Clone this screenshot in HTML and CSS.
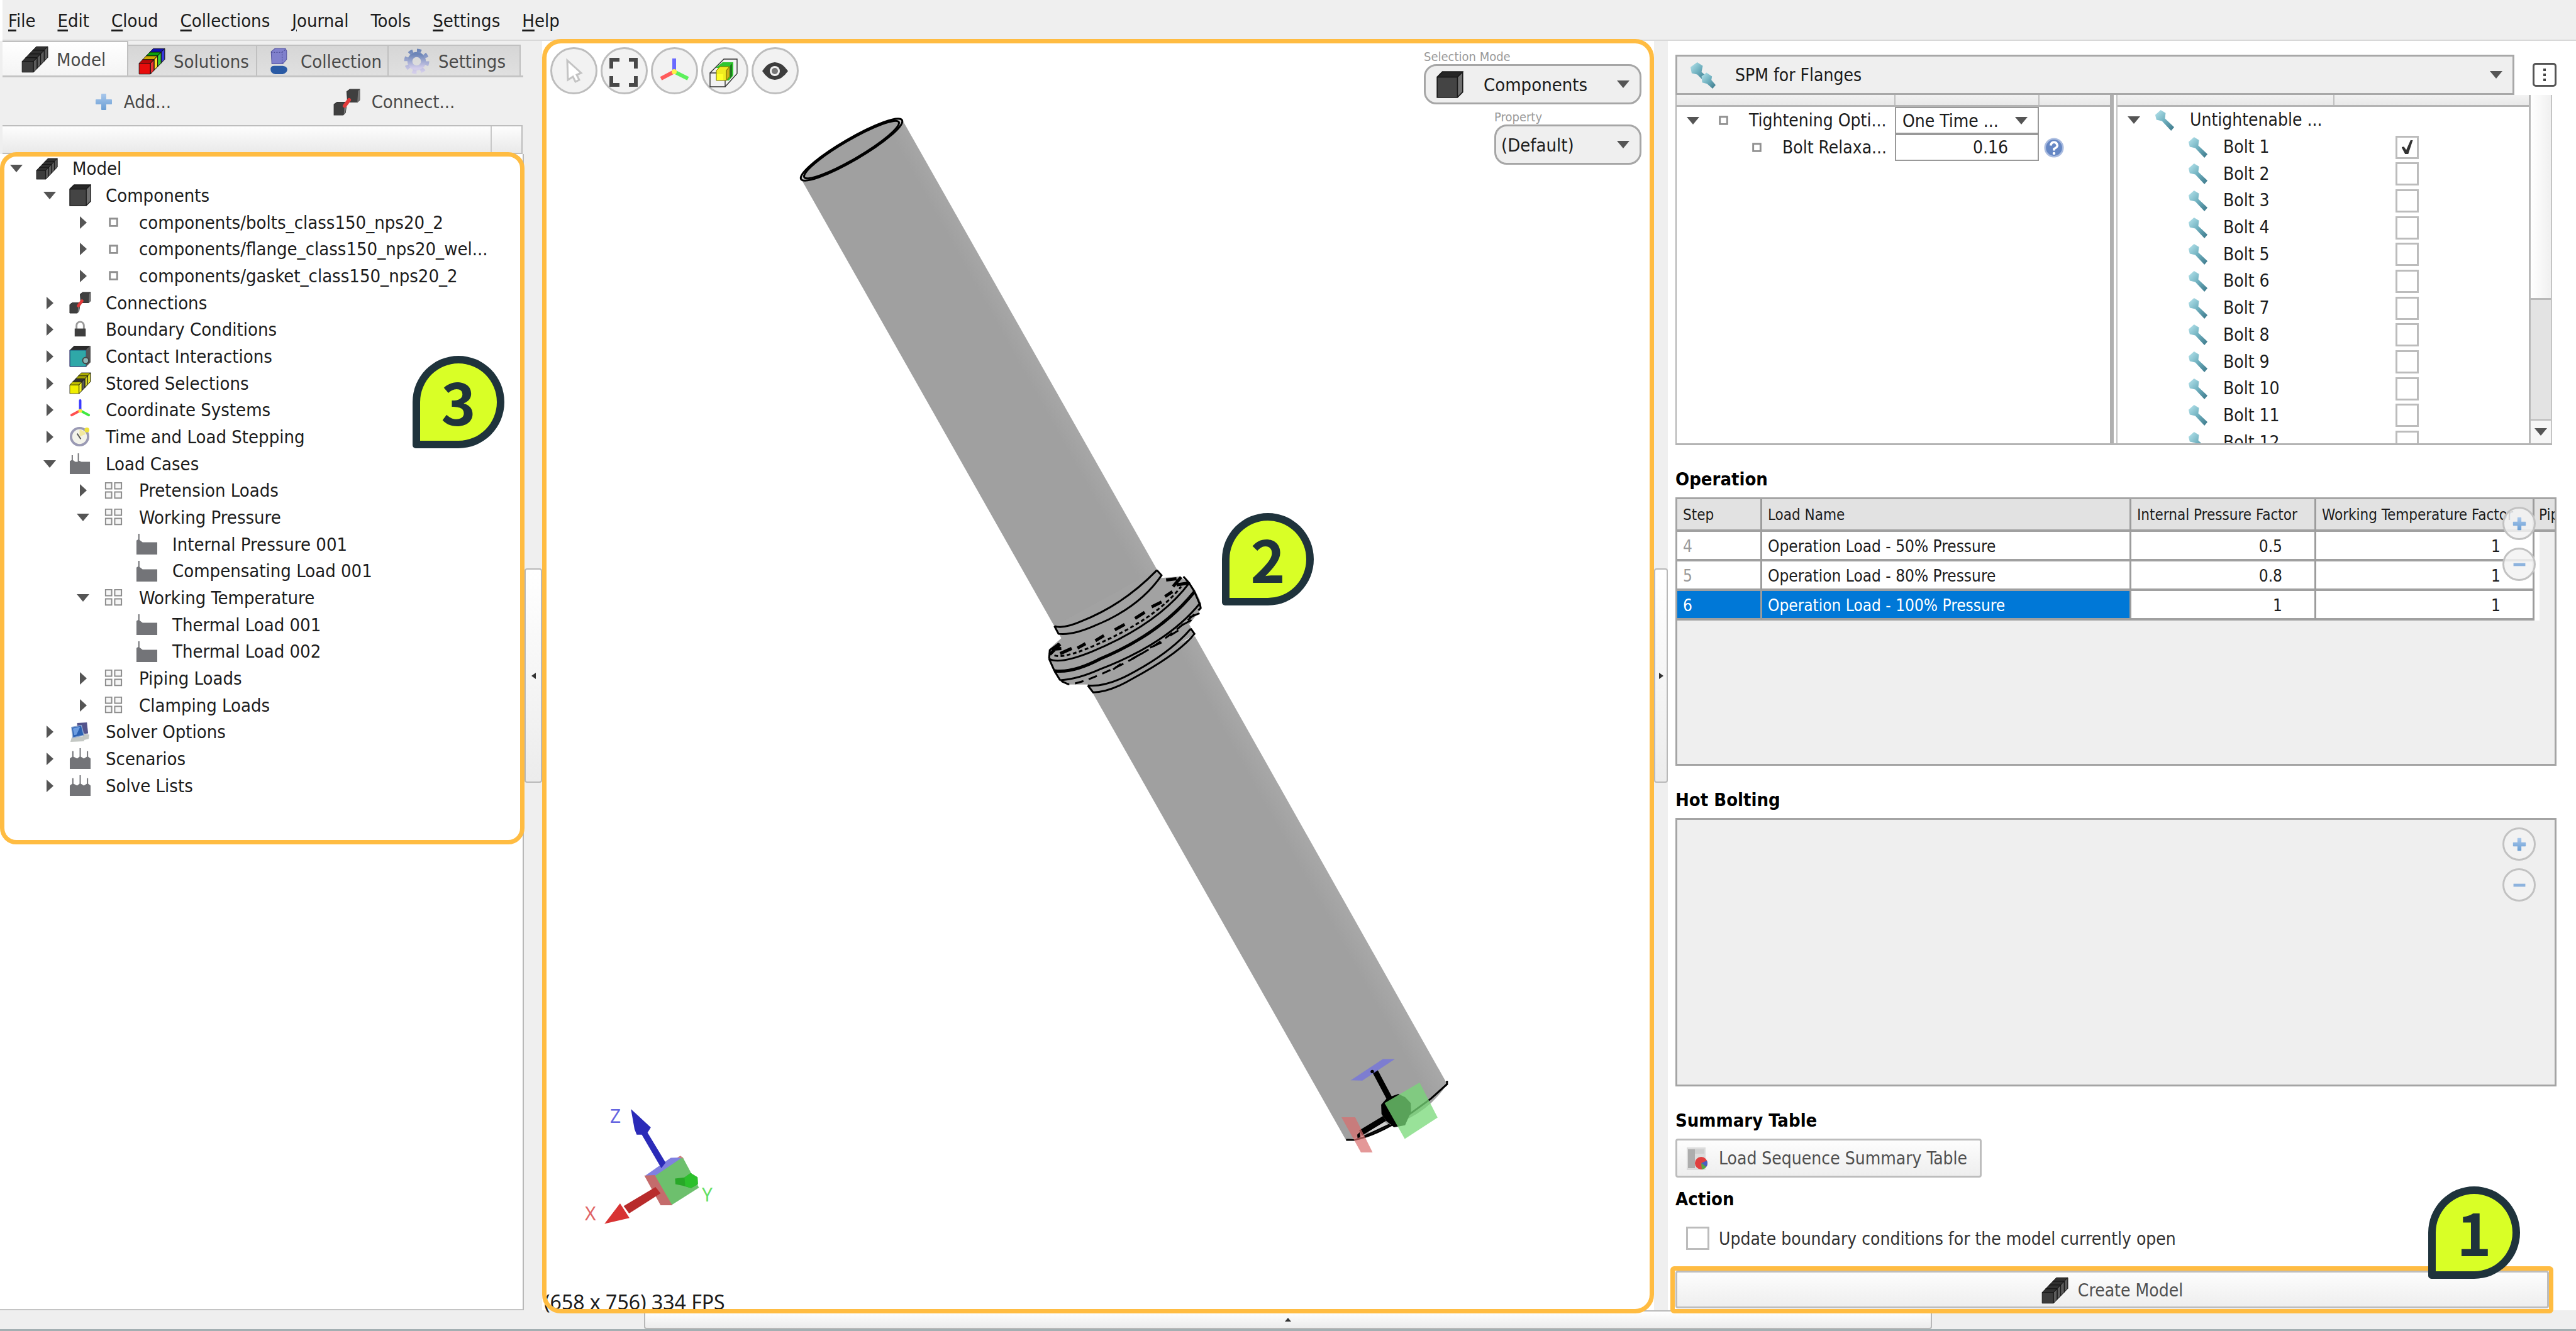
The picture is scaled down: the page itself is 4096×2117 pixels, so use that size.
FILE: index.html
```html
<!DOCTYPE html>
<html lang="en">
<head>
<meta charset="utf-8">
<title>SPM for Flanges</title>
<link rel="stylesheet" href="styles.css">
</head>
<body>
<svg class="defs" aria-hidden="true">
  <defs>
    <g id="seg" stroke="#111" stroke-width=".7">
      <path fill="currentColor" d="M0 5.2H16V20.4H0Z"/>
      <path fill="currentColor" d="M0 5.2 5 0H21L16 5.2Z"/>
      <path fill="#000" fill-opacity=".2" stroke="none" d="M0 5.2 5 0H21L16 5.2Z"/>
      <path fill="currentColor" d="M16 5.2 21 0V15.2L16 20.4Z"/>
      <path fill="#fff" fill-opacity=".16" d="M16 5.2 21 0V15.2L16 20.4Z"/>
    </g>
    <linearGradient id="steel" x1="0" y1="0" x2="1" y2="1">
      <stop offset="0" stop-color="#b9e6ee"/><stop offset=".5" stop-color="#6fb0bf"/><stop offset="1" stop-color="#3b7688"/>
    </linearGradient>
    <linearGradient id="plusfill" x1="0" y1="0" x2="0" y2="1">
      <stop offset="0" stop-color="#a9c8ec"/><stop offset="1" stop-color="#6a9ed4"/>
    </linearGradient>
    <linearGradient id="gearfill" x1="0" y1="0" x2="0" y2="1">
      <stop offset="0" stop-color="#6d86b8"/><stop offset="1" stop-color="#d3cdea"/>
    </linearGradient>
    <linearGradient id="pipefill" gradientUnits="userSpaceOnUse" x1="1600" y1="700" x2="1722" y2="632">
      <stop offset="0" stop-color="#a0a0a0"/><stop offset=".55" stop-color="#a0a0a0"/><stop offset="1" stop-color="#aeaeae"/>
    </linearGradient>
  </defs>
  <symbol id="i-bar" viewBox="-1 -1 38 38"><g color="#3c3c3c"><use href="#seg" x="15" y="0"/><use href="#seg" x="10" y="5.2"/><use href="#seg" x="5" y="10.4"/><use href="#seg" x="0" y="15.6"/></g></symbol>
  <symbol id="i-rainbow" viewBox="-1 -1 38 38"><use href="#seg" x="15" y="0" color="#1414d8"/><use href="#seg" x="10" y="5.2" color="#10c810"/><use href="#seg" x="5" y="10.4" color="#ffd400"/><use href="#seg" x="0" y="15.6" color="#e80c0c"/></symbol>
  <symbol id="i-stored" viewBox="-1 -1 38 38"><use href="#seg" x="15" y="0" color="#d8d800"/><use href="#seg" x="10" y="5.2" color="#c8c800"/><use href="#seg" x="5" y="10.4" color="#3c3c3c"/><use href="#seg" x="0" y="15.6" color="#f0ee00"/></symbol>
  <symbol id="i-cube" viewBox="0 0 36 36"><path fill="#444" d="M1 8H28V35H1Z"/><path fill="#262626" d="M1 8 8 1H35L28 8Z"/><path fill="#707070" d="M28 8 35 1V28L28 35Z"/><path fill="none" stroke="#1a1a1a" stroke-width="1.4" d="M1 8H28V35H1ZM1 8 8 1H35L28 8M35 1V28L28 35"/></symbol>
  <symbol id="i-connect" viewBox="0 0 36 36"><path fill="#3f3f3f" stroke="#333" d="M1 21 5 18H18L16 32 13 35H1ZM18 4 22 1H35V15L32 18H19Z"/><path fill="#777" d="M33 3 35 1V15L32 18ZM15 20 18 18 16 32 14 34Z"/><path stroke="#e23a3a" stroke-width="5" stroke-linecap="round" d="M15 23 21 15"/></symbol>
  <symbol id="i-lock" viewBox="0 0 36 36"><path fill="none" stroke="#9a9a9a" stroke-width="3" d="M12 18V11a6 6 0 0 1 12 0V18"/><path fill="#3e3e3e" d="M9 16H27V29H9Z"/></symbol>
  <symbol id="i-contact" viewBox="0 0 36 36"><path fill="#2fa8a8" stroke="#115" d="M1 8H28V35H1Z"/><path fill="#2b2b2b" d="M1 8 8 1H35L28 8Z"/><path fill="#555" d="M28 8 35 1V28L28 35Z"/><circle cx="27" cy="25" r="5" fill="#8fb5b5" stroke="#444" stroke-width="2"/></symbol>
  <symbol id="i-axes" viewBox="0 0 36 36"><g stroke-width="4" stroke-linecap="round"><path stroke="#3a3aff" d="M18 2V18"/><path stroke="#ff5050" d="M17 19 4 26"/><path stroke="#40e840" d="M19 19 32 26"/></g><circle cx="18" cy="19" r="3" fill="#f5e63c"/></symbol>
  <symbol id="i-clock" viewBox="0 0 36 36"><circle cx="17" cy="18" r="14" fill="#f3f3ea" stroke="#9a9ab4" stroke-width="4"/><path fill="#f2e9a0" d="M17 18V7A11 11 0 0 1 27 14Z"/><path d="M17 19 13 13M17 19 19 22" stroke="#555" stroke-width="2"/><circle cx="29" cy="7" r="4" fill="#efe23a"/></symbol>
  <symbol id="i-cases" viewBox="0 0 36 36"><path fill="#737478" d="M1 14 4 12V4h2v8l4 3h4V1h2v12l4 2h14V35H1Z"/></symbol>
  <symbol id="i-load" viewBox="0 0 36 36"><path fill="#737478" d="M1 12 4 10V1h2v10l5 4H35V35H1Z"/></symbol>
  <symbol id="i-scen" viewBox="0 0 36 36"><path fill="#737478" d="M1 18 5 15V6h2v9l6 3 4-3V1h2v14l5 3 5-3V6h2v9l4 3V35H1Z"/></symbol>
  <symbol id="i-group" viewBox="0 0 36 36"><path fill="#f6f6f6" stroke="#8c8c8c" stroke-width="2" d="M5 5H15V15H5ZM20 5H31V15H20ZM5 20H15V30H5ZM20 20H31V30H20Z"/></symbol>
  <symbol id="i-node" viewBox="0 0 36 36"><path fill="#fff" stroke="#909090" stroke-width="3" d="M12 12H24V24H12Z"/></symbol>
  <symbol id="i-pc" viewBox="0 0 36 36"><path fill="#54548c" d="M13 3 29 2 31 20 14 22Z"/><path fill="#c4c8c4" d="M24 20 33 22 32 29 20 32ZM4 27 22 25 25 33 2 34Z"/><path fill="#2b62b4" stroke="#8fa8d0" stroke-width="1.5" d="M4 10 20 7 24 23 6 27Z"/><path fill="#6d9de0" d="M6 12 18 9 12 22 8 23Z"/></symbol>
  <symbol id="i-bolt" viewBox="0 0 36 36"><path fill="url(#steel)" d="M3 9 12 1 20 6 19 15 34 29 29 35 14 19 5 17Z"/></symbol>
  <symbol id="i-bolts" viewBox="0 0 44 44"><path fill="url(#steel)" d="M2 9 13 1 22 7 20 17 27 23 22 30 13 21 4 19Z"/><path fill="url(#steel)" d="M20 24 28 18 37 24 36 30 43 38 38 44 29 36 21 34Z"/></symbol>
  <symbol id="i-coll" viewBox="0 0 28 42"><path fill="#8080cc" stroke="#5454a0" d="M2 6 8 1H24L26 5V18L20 25H3Z"/><path fill="none" stroke="#44448c" stroke-dasharray="2 2" d="M2 7H19V25M19 7 25 2"/><path fill="#2a5aa4" d="M1 33Q1 28 7 28H20Q27 29 27 34T20 41H8Q1 40 1 33Z"/></symbol>
  <symbol id="i-gear" viewBox="0 0 44 44"><circle cx="22" cy="22" r="11" fill="none" stroke="url(#gearfill)" stroke-width="8"/><circle cx="22" cy="22" r="17.5" fill="none" stroke="url(#gearfill)" stroke-width="6" stroke-dasharray="6.9 6.84"/></symbol>
  <symbol id="i-plus" viewBox="0 0 28 28"><path fill="url(#plusfill)" d="M11 1h6q1 0 1 1v8h8q1 0 1 1v6q0 1-1 1h-8v8q0 1-1 1h-6q-1 0-1-1v-8H2q-1 0-1-1v-6q0-1 1-1h8V2q0-1 1-1Z"/></symbol>
  <symbol id="i-minus" viewBox="0 0 28 28"><path fill="#8db3de" d="M2 11H26V17H2Z"/></symbol>
  <symbol id="i-sheet" viewBox="0 0 36 40"><path fill="#dcdcdc" d="M1 2H31V38H1Z"/><path fill="#adadad" d="M3 5H14V35H3Z"/><path fill="#cfcfcf" d="M14 5H29V12H14Z"/><circle cx="24" cy="27" r="10" fill="#e04040"/><path fill="#4660c0" d="M24 27 33 23A10 10 0 0 1 32 33Z"/><path fill="#55a848" d="M24 27 32 33A10 10 0 0 1 25 37Z"/></symbol>
  <symbol id="i-help" viewBox="0 0 36 36"><circle cx="18" cy="18" r="16" fill="#6587c4" stroke="#a9bbdf" stroke-width="3"/><path fill="none" stroke="#fff" stroke-width="4" d="M12 14Q13 8 18 8T24 14Q24 17 18 20V23"/><circle cx="18" cy="28" r="2.5" fill="#fff"/></symbol>
  <symbol id="i-cursor" viewBox="0 0 75 75"><path fill="#fff" stroke="#c4c4c4" stroke-width="3" d="M27 21 49 41 42 44 46 52 40 55 36 47 28 52Z"/></symbol>
  <symbol id="i-fit" viewBox="0 0 75 75"><path fill="none" stroke="#484848" stroke-width="6" d="M17 34V20H30M45 20H56V34M56 46V60H45M30 60H17V46"/></symbol>
  <symbol id="i-triad" viewBox="0 0 75 75"><g stroke-width="6"><path stroke="#6a6aff" d="M37 18V36"/><path stroke="#ff5c5c" d="M35 40 16 50"/><path stroke="#5cf05c" d="M39 40 59 50"/></g><circle cx="37" cy="39" r="4" fill="#fff04a"/></symbol>
  <symbol id="i-clip" viewBox="0 0 75 75"><path fill="none" stroke="#333" stroke-width="1.4" d="M14 41H38V63H14ZM14 41 36 19H57V42L38 63"/><path fill="#2fc62f" d="M23 33 34 24H51V45L44 53H40V33Z"/><path fill="#1d7a1d" d="M49 26V46L46 50V29Z"/><path fill="#f0ec20" stroke="#7a7400" d="M24 37 30 31H45L40 37V53H24Z"/><path fill="#cfae1a" stroke="#7a7400" d="M40 37 45 31V47L40 53Z"/><path fill="#ffff28" d="M25 43H35V52H25Z"/></symbol>
  <symbol id="i-eye" viewBox="0 0 75 75"><path fill="#3d3d3d" d="M17 38Q26 24 37 24T58 38Q48 52 37 52T17 38Z"/><circle cx="37" cy="38" r="8" fill="#f2f2f2"/><circle cx="37" cy="38" r="5" fill="#777"/></symbol>
</svg>

<nav class="menubar">
  <a href="#"><u>F</u>ile</a><a href="#"><u>E</u>dit</a><a href="#"><u>C</u>loud</a><a href="#"><u>C</u>ollections</a><a href="#"><u>J</u>ournal</a><a href="#">Tools</a><a href="#"><u>S</u>ettings</a><a href="#"><u>H</u>elp</a>
</nav>

<main class="workspace">
  <section class="browser">
    <div class="tabs">
      <button class="tab active"><svg class="ic42"><use href="#i-bar"/></svg>Model</button>
      <button class="tab"><svg class="ic42"><use href="#i-rainbow"/></svg>Solutions</button>
      <button class="tab coll"><svg class="ic42"><use href="#i-coll"/></svg>Collection</button>
      <button class="tab sett"><svg class="ic42"><use href="#i-gear"/></svg>Settings</button>
    </div>
    <div class="actions">
      <button><svg class="ic28"><use href="#i-plus"/></svg>Add...</button>
      <button><svg class="ic42"><use href="#i-connect"/></svg>Connect...</button>
    </div>
    <div class="treehead"></div>
    <div class="treewrap">
      <ul class="tree">
        <li class="row"><i class="tri open"></i><svg><use href="#i-bar"/></svg><span>Model</span></li>
        <li class="row l1"><i class="tri open"></i><svg><use href="#i-cube"/></svg><span>Components</span></li>
        <li class="row l2"><i class="tri"></i><svg><use href="#i-node"/></svg><span>components/bolts_class150_nps20_2</span></li>
        <li class="row l2"><i class="tri"></i><svg><use href="#i-node"/></svg><span>components/flange_class150_nps20_wel...</span></li>
        <li class="row l2"><i class="tri"></i><svg><use href="#i-node"/></svg><span>components/gasket_class150_nps20_2</span></li>
        <li class="row l1"><i class="tri"></i><svg><use href="#i-connect"/></svg><span>Connections</span></li>
        <li class="row l1"><i class="tri"></i><svg><use href="#i-lock"/></svg><span>Boundary Conditions</span></li>
        <li class="row l1"><i class="tri"></i><svg><use href="#i-contact"/></svg><span>Contact Interactions</span></li>
        <li class="row l1"><i class="tri"></i><svg><use href="#i-stored"/></svg><span>Stored Selections</span></li>
        <li class="row l1"><i class="tri"></i><svg><use href="#i-axes"/></svg><span>Coordinate Systems</span></li>
        <li class="row l1"><i class="tri"></i><svg><use href="#i-clock"/></svg><span>Time and Load Stepping</span></li>
        <li class="row l1"><i class="tri open"></i><svg><use href="#i-cases"/></svg><span>Load Cases</span></li>
        <li class="row l2"><i class="tri"></i><svg><use href="#i-group"/></svg><span>Pretension Loads</span></li>
        <li class="row l2"><i class="tri open"></i><svg><use href="#i-group"/></svg><span>Working Pressure</span></li>
        <li class="row l3"><i class="tri none"></i><svg><use href="#i-load"/></svg><span>Internal Pressure 001</span></li>
        <li class="row l3"><i class="tri none"></i><svg><use href="#i-load"/></svg><span>Compensating Load 001</span></li>
        <li class="row l2"><i class="tri open"></i><svg><use href="#i-group"/></svg><span>Working Temperature</span></li>
        <li class="row l3"><i class="tri none"></i><svg><use href="#i-load"/></svg><span>Thermal Load 001</span></li>
        <li class="row l3"><i class="tri none"></i><svg><use href="#i-load"/></svg><span>Thermal Load 002</span></li>
        <li class="row l2"><i class="tri"></i><svg><use href="#i-group"/></svg><span>Piping Loads</span></li>
        <li class="row l2"><i class="tri"></i><svg><use href="#i-group"/></svg><span>Clamping Loads</span></li>
        <li class="row l1"><i class="tri"></i><svg><use href="#i-pc"/></svg><span>Solver Options</span></li>
        <li class="row l1"><i class="tri"></i><svg><use href="#i-scen"/></svg><span>Scenarios</span></li>
        <li class="row l1"><i class="tri"></i><svg><use href="#i-scen"/></svg><span>Solve Lists</span></li>
      </ul>
      <div class="mark mark-tree"></div>
      <div class="badge badge-tree">3</div>
    </div>
  </section>

  <div class="gutter"><button class="grip left" aria-label="Collapse left panel"></button></div>

  <section class="viewport">
    <svg class="scene" viewBox="862 65 1768 2019">
      <g fill="url(#pipefill)">
        <path d="M1274 285 1435 191 1842 910 1677 997Z"/>
        <path d="M1730 1089 1900 1012 2301 1724Q2275 1765 2225 1786T2140 1813Z"/>
      </g>
      <g fill="#a0a0a0" stroke="#000" stroke-width="3">
        <ellipse cx="1354" cy="238" rx="93" ry="17" fill="#c4c4c4" transform="rotate(-30.3 1354 238)"/>
        <ellipse cx="1354" cy="238" rx="87" ry="15" transform="rotate(-30.3 1354 238)"/>
      </g>
      <g transform="translate(1559.3 804.3) scale(.3664 .2736)">
        <path fill="#a2a2a2" d="M320 700 765 372 785 420 860 412 905 445 930 490 952 550 957 600 905 690 930 750 490 1085 465 1040 380 1040 345 1010 320 960 297 900 300 830 350 770Z"/>
        <g class="edges" fill="none" stroke="#000">
          <path d="M320 700Q360 718 440 670 620 575 765 375M320 700 338 745Q400 755 500 695 690 590 785 405L765 375"/>
          <path d="M297 890Q340 925 480 850 770 690 905 450L880 412M297 890 300 840 340 800"/>
          <path stroke-dasharray="6 4" d="M320 870Q360 890 490 815 760 660 870 470"/>
          <path class="heavy" d="M320 960Q400 975 520 890 780 745 928 500"/>
          <path d="M928 500 905 450M320 960 297 890"/>
          <path d="M345 1015Q420 1010 520 950 810 800 950 570L928 500M345 1015 320 960"/>
          <path stroke-dasharray="14 9" d="M350 1020 380 1038Q430 1036 530 975 780 830 955 595L950 560"/>
          <path d="M465 1045Q540 1055 640 985 820 860 912 715M465 1045 488 1085Q560 1085 660 1005 860 860 928 745L912 715"/>
          <path class="heavy" d="M300 865 345 805M345 860 395 830M420 828 455 802M498 785 535 755M582 722 625 690M670 655 712 620M742 588 785 560M800 528 832 500M805 432 850 425M835 470 870 415M850 460 900 450M310 835 350 830"/>
          <path d="M735 825 785 795M655 892 698 860M575 952 608 920M822 755 858 725M873 695 915 665M905 650 950 625"/>
        </g>
      </g>
      <g transform="translate(2084.6 1666) scale(.272)">
        <path fill="none" stroke="#000" stroke-width="11" d="M205 540H255Q400 510 590 380L700 300 795 215V195"/>
        <path fill="#d0d0d0" d="M330 495 425 430 455 455 345 500Z"/>
        <path stroke="#000" stroke-width="34" d="M375 140 460 300M290 500 430 415"/>
        <path stroke="#000" stroke-width="10" d="M310 520 460 450"/>
        <path d="M410 335 445 295 510 272 550 290 583 325 585 375 550 455 485 467 440 430 412 390Z"/>
        <path fill="#7777d8" fill-opacity=".85" d="M232 192 420 68H490L300 194Z"/>
        <circle cx="358" cy="141" r="10"/>
        <path fill="#77d877" fill-opacity=".75" d="M430 325 635 205 740 410 548 535Z"/>
        <path fill="#d86c6c" fill-opacity=".7" d="M178 408H258L360 614H292Z"/>
        <path d="M270 510 285 495 288 525 272 530Z"/>
      </g>
      <g transform="translate(853.5 1707) scale(.5757 .2736)">
        <path fill="#8080e0" d="M300 595 370 492 403 490 330 600Z"/>
        <path fill="#6dc06d" d="M326 598 403 488 448 665 372 767Z"/>
        <path fill="#c46c6c" d="M297 595 326 592 374 768H342Z"/>
        <path fill="#cc8080" d="M388 490 397 480 406 496Z"/>
        <path fill="#2b2bb8" d="M260 208 315 315 306 345 356 520 344 552 290 357H276L270 325Z"/>
        <path fill="#28a828" d="M382 612 408 606 425 580 444 605 445 645 426 668 404 654 383 645Z"/>
        <path fill="#2cc02c" d="M408 606 425 580 444 605 445 645 426 668 410 656Z"/>
        <path fill="#b82b2b" d="M328 662 342 698 255 815 240 772Z"/>
        <path fill="#d83333" d="M230 757 256 842 187 875Z"/>
      </g>
      <g class="axis-names">
        <text x="970" y="1786" fill="#6464e0">Z</text>
        <text x="1116" y="1911" fill="#64e064">Y</text>
        <text x="930" y="1941" fill="#e06464">X</text>
      </g>
    </svg>
    <div class="viewtools">
      <button aria-label="Select"><svg><use href="#i-cursor"/></svg></button>
      <button aria-label="Fit view"><svg><use href="#i-fit"/></svg></button>
      <button aria-label="Orientation"><svg><use href="#i-triad"/></svg></button>
      <button aria-label="Clip"><svg><use href="#i-clip"/></svg></button>
      <button aria-label="Visibility"><svg><use href="#i-eye"/></svg></button>
    </div>
    <div class="modes">
      <div class="mode wide">
        <label for="selmode">Selection Mode</label>
        <div class="combo round"><svg class="ic42"><use href="#i-cube"/></svg><select id="selmode"><option>Components</option></select></div>
      </div>
      <div class="mode">
        <label for="prop">Property</label>
        <div class="combo round"><select id="prop"><option>(Default)</option></select></div>
      </div>
    </div>
    <div class="fps">(658 x 756) 334 FPS</div>
    <div class="mark mark-view"></div>
    <div class="badge badge-view">2</div>
  </section>

  <div class="gutter"><button class="grip right" aria-label="Collapse right panel"></button></div>

  <section class="wizard">
    <div class="titlerow">
      <div class="combo title"><svg class="ic42"><use href="#i-bolts"/></svg><select aria-label="Wizard"><option>SPM for Flanges</option></select></div>
      <button class="kebab" aria-label="More"><i></i><i></i><i></i></button>
    </div>
    <div class="split">
      <div class="params">
        <div class="strip"><i></i><i></i><i></i></div>
        <div class="rows two">
          <div class="prow"><div class="row"><i class="tri open"></i><svg><use href="#i-node"/></svg><label for="tight">Tightening Opti...</label></div><div class="combo cell"><select id="tight"><option>One Time ...</option></select></div></div>
          <div class="prow"><div class="row l1"><i class="tri none"></i><svg><use href="#i-node"/></svg><label for="relax">Bolt Relaxa...</label></div><input id="relax" class="num" type="text" value="0.16"><svg class="help"><use href="#i-help"/></svg></div>
        </div>
      </div>
      <div class="bolts">
        <div class="strip"><i></i><i></i></div>
        <div class="rows thirteen">
          <div class="row"><i class="tri open"></i><svg><use href="#i-bolt"/></svg><span>Untightenable ...</span></div>
          <div class="brow"><label class="row l1" for="b1"><i class="tri none"></i><svg><use href="#i-bolt"/></svg>Bolt 1</label><input type="checkbox" id="b1" checked></div>
          <div class="brow"><label class="row l1" for="b2"><i class="tri none"></i><svg><use href="#i-bolt"/></svg>Bolt 2</label><input type="checkbox" id="b2"></div>
          <div class="brow"><label class="row l1" for="b3"><i class="tri none"></i><svg><use href="#i-bolt"/></svg>Bolt 3</label><input type="checkbox" id="b3"></div>
          <div class="brow"><label class="row l1" for="b4"><i class="tri none"></i><svg><use href="#i-bolt"/></svg>Bolt 4</label><input type="checkbox" id="b4"></div>
          <div class="brow"><label class="row l1" for="b5"><i class="tri none"></i><svg><use href="#i-bolt"/></svg>Bolt 5</label><input type="checkbox" id="b5"></div>
          <div class="brow"><label class="row l1" for="b6"><i class="tri none"></i><svg><use href="#i-bolt"/></svg>Bolt 6</label><input type="checkbox" id="b6"></div>
          <div class="brow"><label class="row l1" for="b7"><i class="tri none"></i><svg><use href="#i-bolt"/></svg>Bolt 7</label><input type="checkbox" id="b7"></div>
          <div class="brow"><label class="row l1" for="b8"><i class="tri none"></i><svg><use href="#i-bolt"/></svg>Bolt 8</label><input type="checkbox" id="b8"></div>
          <div class="brow"><label class="row l1" for="b9"><i class="tri none"></i><svg><use href="#i-bolt"/></svg>Bolt 9</label><input type="checkbox" id="b9"></div>
          <div class="brow"><label class="row l1" for="b10"><i class="tri none"></i><svg><use href="#i-bolt"/></svg>Bolt 10</label><input type="checkbox" id="b10"></div>
          <div class="brow"><label class="row l1" for="b11"><i class="tri none"></i><svg><use href="#i-bolt"/></svg>Bolt 11</label><input type="checkbox" id="b11"></div>
          <div class="brow"><label class="row l1" for="b12"><i class="tri none"></i><svg><use href="#i-bolt"/></svg>Bolt 12</label><input type="checkbox" id="b12"></div>
        </div>
      </div>
      <div class="scroll"><div class="thumb"></div><div class="track"></div><div class="down"><i class="tri open"></i></div></div>
    </div>

    <h2>Operation</h2>
    <div class="panel">
      <table>
        <colgroup><col class="c1"><col class="c2"><col class="c3"><col class="c4"><col></colgroup>
        <thead><tr><th>Step</th><th>Load Name</th><th>Internal Pressure Factor</th><th>Working Temperature Factor</th><th>Pip</th></tr></thead>
        <tbody>
          <tr><td class="dim">4</td><td>Operation Load - 50% Pressure</td><td class="n">0.5</td><td class="n">1</td><td></td></tr>
          <tr><td class="dim">5</td><td>Operation Load - 80% Pressure</td><td class="n">0.8</td><td class="n">1</td><td></td></tr>
          <tr><td class="sel">6</td><td class="sel">Operation Load - 100% Pressure</td><td class="n">1</td><td class="n">1</td><td></td></tr>
        </tbody>
      </table>
      <div class="addrem"><button aria-label="Add step"><svg class="ic20"><use href="#i-plus"/></svg></button><button aria-label="Remove step"><svg class="ic20"><use href="#i-minus"/></svg></button></div>
    </div>

    <h2>Hot Bolting</h2>
    <div class="panel">
      <div class="addrem"><button aria-label="Add"><svg class="ic20"><use href="#i-plus"/></svg></button><button aria-label="Remove"><svg class="ic20"><use href="#i-minus"/></svg></button></div>
    </div>

    <h2>Summary Table</h2>
    <button class="btn summary"><svg><use href="#i-sheet"/></svg>Load Sequence Summary Table</button>
    <h2 class="near">Action</h2>
    <div class="update"><input type="checkbox" id="upd"><label for="upd">Update boundary conditions for the model currently open</label></div>
    <div class="createwrap">
      <button class="btn create"><svg class="ic42"><use href="#i-bar"/></svg>Create Model</button>
      <div class="mark mark-create"></div>
      <div class="badge badge-create">1</div>
    </div>
  </section>
</main>
<footer class="bottombar"><button class="grip bottom" aria-label="Show lower panel"></button></footer>
</body>
</html>
```
FILE: styles.css
```css
* { box-sizing: border-box; }
body {
  margin: 0;
  height: 100vh;
  display: flex;
  flex-direction: column;
  background: #fff;
  color: #1c1c1c;
  font: 29px/36px "DejaVu Sans Condensed", "Noto Sans", sans-serif;
  overflow: hidden;
}
button, select, input { font: inherit; color: inherit; margin: 0; padding: 0; border: 0; background: none; border-radius: 0; outline: 0; }
.defs { position: absolute; width: 0; height: 0; }
svg { flex: none; display: block; }
.ic42 { width: 43px; height: 43px; }
.ic28 { width: 28px; height: 28px; }
.ic20 { width: 22px; height: 22px; }

.menubar {
  margin-left: 4px;
  height: 65px;
  padding: 2px 9px 0;
  display: flex;
  align-items: center;
  gap: 35px;
  background: #efefef;
  border-bottom: 2px solid #d8d8d8;
}
.menubar a { color: #1c1c1c; text-decoration: none; }
.menubar u { text-decoration-thickness: 3px; text-underline-offset: 4px; }

.workspace {
  flex: 1;
  min-height: 0;
  display: grid;
  grid-template-columns: 834fr 28fr 1768fr 22fr 1444fr;
}
.workspace > * { min-width: 0; position: relative; }

/* left browser */
.browser { display: flex; flex-direction: column; background: #efefef; }
.tabs { margin: 0 2px 0 4px; height: 58px; display: grid; grid-template-columns: 200fr 205fr 209fr 210fr 4fr; align-items: end; border-bottom: 3px solid #c4c4c4; }
.tab { height: 49px; display: flex; align-items: center; gap: 13px; padding: 2px 0 0 16px; background: linear-gradient(#d6d6d6, #e0e0e0); border: 2px solid #c0c0c0; border-left: 0; border-bottom: 0; color: #4a4a4a; white-space: nowrap; }
.tab.active { height: 55px; padding-left: 30px; background: linear-gradient(#fff, #f4f4f4); }
.tab.coll { padding-left: 13px; }
.tab.sett { padding-left: 23px; }
.actions { height: 76px; margin-left: 4px; padding-top: 2px; display: grid; grid-template-columns: 1fr 1fr; color: #4a4a4a; }
.actions button { display: flex; align-items: center; justify-content: center; gap: 18px; }
.treehead { height: 46px; margin: 0 3px 0 4px; border: 2px solid #bdbdbd; border-left: 0; background: linear-gradient(#fdfdfd, #e9e9e9); padding-left: 776px; }
.treehead::before { content: ""; display: block; width: 2px; height: 42px; background: #c8c8c8; }
.treewrap { flex: 1; position: relative; background: #fff; border-right: 2px solid #b8b8b8; margin-right: 1px; border-bottom: 2px solid #c4c4c4; }
.tree { list-style: none; margin: 0; padding: 2px 0 0; height: 1026px; display: grid; grid-auto-rows: 1fr; }
.row { display: flex; align-items: center; padding-left: 10px; min-width: 0; white-space: nowrap; }
.row svg { width: 35px; height: 35px; margin: 0 23px 0 15px; }
.l1 { padding-left: 63px; }
.l2 { padding-left: 116px; }
.l3 { padding-left: 169px; }
.tri { flex: none; width: 32px; display: flex; justify-content: center; }
.tri::before { content: ""; border-style: solid; border-width: 10px 0 10px 11px; border-color: transparent transparent transparent #555; }
.tri.open::before { border-width: 12px 10px 0; border-color: #555 transparent transparent; }
.tri.none::before { display: none; }

/* callout frames and numbers */
.mark { position: absolute; border: 7px solid #ffbc42; pointer-events: none; z-index: 2; }
.mark-tree { inset: -3px -3px auto 0; height: 1101px; border-radius: 26px; }
.mark-view { inset: -3px 0 -5px 0; border-radius: 30px; }
.mark-create { inset: -7px -7px -8px -8px; border-radius: 6px; }
.badge {
  position: absolute;
  z-index: 3;
  width: 146px;
  height: 147px;
  border: 12px solid #1f333c;
  border-radius: 50% 50% 50% 5px;
  background: #d9ff26;
  color: #1f333c;
  font: 700 94px/116px "Noto Sans CJK SC", "Noto Sans", sans-serif;
  text-align: center;
}
.badge-tree { right: 29px; top: 321px; }
.badge-view { right: 541px; top: 751px; }
.badge-create { right: 46px; bottom: 47px; }

/* collapse grips */
.gutter { background: #efefef; display: flex; align-items: center; justify-content: center; }
.grip { width: 100%; height: 341px; border: 2px solid #b8b8b8; border-radius: 4px; background: linear-gradient(#fff, #ececec); display: flex; align-items: center; justify-content: center; }
.grip::before { content: ""; border: 5px solid transparent; }
.grip.left::before { border-right: 7px solid #333; border-left: 0; }
.grip.right::before { border-left: 7px solid #333; border-right: 0; }

/* 3D view */
.viewport { background: #fff; z-index: 1; }
.scene { width: 100%; height: 100%; position: absolute; inset: 0; }
.edges path { vector-effect: non-scaling-stroke; stroke-width: 3; }
.edges .heavy { stroke-width: 5; }
.axis-names { font: 30px "Noto Sans", sans-serif; }
.viewtools { position: absolute; left: 13px; top: 10px; display: flex; gap: 5px; }
.viewtools button { width: 75px; height: 75px; border: 3px solid #bdbdbd; border-radius: 50%; background: #f2f2f2; }
.viewtools svg { width: 75px; height: 75px; margin: -3px; }
.modes { position: absolute; right: 20px; top: 13px; display: flex; flex-direction: column; align-items: flex-end; gap: 8px; }
.mode { width: 234px; }
.mode.wide { width: 346px; }
.mode label { display: block; font-size: 20px; line-height: 24px; color: #9a9a9a; }
.combo { position: relative; display: flex; align-items: center; background: #efefef; border: 2px solid #a6a6a6; }
.combo::after { content: ""; position: absolute; right: 16px; top: 50%; margin-top: -6px; border-style: solid; border-width: 12px 10px 0; border-color: #555 transparent transparent; pointer-events: none; }
.combo select { appearance: none; flex: 1; min-width: 0; height: 100%; padding-top: 2px; }
.combo.round { height: 64px; border-width: 3px; border-radius: 20px; padding-left: 8px; }
.wide .combo.round { padding-left: 17px; }
.wide .combo select { padding-left: 32px; }
.fps { position: absolute; left: 3px; bottom: -9px; font: 32px/44px "Noto Sans", sans-serif; }

/* right wizard */
.wizard { background: #fff; display: flex; flex-direction: column; padding: 22px 31px 3px 12px; font-size: 28px; z-index: 1; }
.titlerow { display: flex; align-items: center; gap: 29px; }
.combo.title { flex: 1; height: 64px; padding-left: 19px; border-width: 3px; border-color: #a8a8a8; }
.title select { padding-left: 30px; }
.kebab { width: 38px; height: 38px; border: 3px solid #555; border-radius: 5px; background: #fff; display: flex; flex-direction: column; align-items: center; justify-content: center; gap: 4px; }
.kebab i { width: 4px; height: 4px; background: #444; }
.split { height: 557px; margin-right: 7px; display: grid; grid-template-columns: 697fr 660fr 37fr; border-bottom: 3px solid #b4b4b4; }
.params { border-left: 2px solid #b4b4b4; border-right: 6px solid #b0b0b0; }
.bolts { border-left: 2px solid #c4c4c4; margin-left: 4px; overflow: hidden; }
.strip { height: 19px; display: grid; grid-template-columns: 348px 229px 1fr; background: linear-gradient(#f2f2f2, #e9e9e9); border-bottom: 3px solid #b4b4b4; }
.bolts .strip { grid-template-columns: 345px 1fr; }
.strip i { border-right: 2px solid #c0c0c0; }
.strip i:last-child { border: 0; }
.rows { display: grid; grid-auto-rows: 1fr; }
.rows.two { height: 86px; }
.rows.thirteen { height: 555px; }
.prow { display: flex; align-items: stretch; }
.prow .row { width: 347px; flex: none; }
.prow .combo, .num { width: 229px; flex: none; border: 2px solid #999; background: #fff; }
.prow .combo select { padding-left: 10px; }
.num { text-align: right; padding-right: 47px; }
.help { width: 32px; height: 32px; margin-left: 8px; align-self: center; }
.brow { display: grid; grid-template-columns: 442px auto; align-items: center; }
input[type="checkbox"] { appearance: none; width: 37px; height: 37px; border: 3px solid #bcbcbc; background: #fff; display: grid; place-items: center; flex: none; }
input[type="checkbox"]:checked::after { content: ""; width: 18px; height: 22px; background: #333; clip-path: polygon(0 50%, 22% 46%, 42% 70%, 80% 0, 100% 0, 60% 100%, 32% 100%); }
.scroll { display: flex; flex-direction: column; border-left: 3px solid #b8b8b8; border-right: 2px solid #c4c4c4; }
.thumb { flex: 326; background: linear-gradient(to right, #fff, #f0f0f0); border-bottom: 3px solid #b8b8b8; }
.track { flex: 192; background: #e3e3e3; border-bottom: 2px solid #b8b8b8; }
.down { flex: 36; background: #f6f6f6; display: flex; align-items: center; }

h2 { margin: 36px 0 11px; font-size: 29px; line-height: 36px; color: #000; }
h2.near { margin: 16px 0 0; }
.panel { flex: 1; position: relative; border: 3px solid #a4a4a4; background: #efefef; overflow: hidden; }
table { width: 100%; table-layout: fixed; border-collapse: separate; border-spacing: 0; font-size: 26px; }
.c1 { width: 135px; } .c2 { width: 587px; } .c3 { width: 294px; } .c4 { width: 347px; }
th, td { height: 47px; padding: 2px 0 0 9px; border-right: 3px solid #9c9c9c; border-bottom: 4px solid #a0a0a0; white-space: nowrap; text-align: left; line-height: 36px; background: #fff; overflow: hidden; }
th { height: 52px; font-size: 24px; font-weight: 400; background: #e2e2e2; }
th:last-child { border-right: 0; padding-left: 7px; }
td:last-child { border: 0; background: linear-gradient(to right, #fff 8px, #efefef 8px); }
td.n { text-align: right; padding-right: 51px; }
td.dim { color: #9a9a9a; }
td.sel { background: #0078d7; color: #fff; }
.addrem { position: absolute; right: 30px; top: 12px; display: flex; flex-direction: column; gap: 12px; }
.addrem button { width: 53px; height: 53px; border: 3px solid #c2c2c2; border-radius: 50%; background: rgba(242,242,242,.85); display: grid; place-items: center; }
.btn { display: flex; align-items: center; color: #505050; background: linear-gradient(#fdfdfd, #eeeeee); border: 3px solid #bdbdbd; border-radius: 4px; }
.summary { align-self: flex-start; height: 62px; padding: 2px 20px 0 14px; gap: 16px; }
.summary svg { width: 36px; height: 40px; }
.update { margin: 26px 0 33px 17px; display: flex; align-items: center; gap: 15px; color: #333; line-height: 37px; }
.update label { padding-top: 3px; line-height: 34px; }
.createwrap { position: relative; margin-right: 12px; }
.create { width: 100%; height: 60px; padding-top: 3px; justify-content: center; gap: 15px; }

.bottombar { height: 33px; background: #efefef; border-bottom: 3px solid #a3afb2; display: flex; justify-content: center; }
.grip.bottom { width: 50%; height: 30px; }
.grip.bottom::before { border-bottom: 6px solid #333; border-top: 0; }
```
